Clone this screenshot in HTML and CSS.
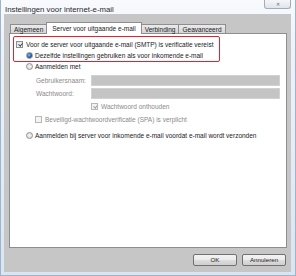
FILE: index.html
```html
<!DOCTYPE html>
<html>
<head>
<meta charset="utf-8">
<link rel="stylesheet" href="styles.css">
</head>
<body>
<div class="window">
  <div class="titlebar">
    <span class="title">Instellingen voor internet-e-mail</span>
    <span class="close">&#x2715;</span>
  </div>
  <div class="client">
    <div class="tabs">
      <span class="tab">Algemeen</span>
      <span class="tab active">Server voor uitgaande e-mail</span>
      <span class="tab">Verbinding</span>
      <span class="tab">Geavanceerd</span>
    </div>
    <div class="panel">
      <div class="hilite">
        <div class="row r1"><span class="cb checked"></span><span class="txt">Voor de server voor uitgaande e-mail (SMTP) is verificatie vereist</span></div>
        <div class="row r2"><span class="rb selected"></span><span class="txt">Dezelfde instellingen gebruiken als voor inkomende e-mail</span></div>
      </div>
      <div class="row r3"><span class="rb"></span><span class="txt">Aanmelden met</span></div>
      <div class="row field-row fr1"><span class="lbl">Gebruikersnaam:</span><span class="field"></span></div>
      <div class="row field-row fr2"><span class="lbl">Wachtwoord:</span><span class="field"></span></div>
      <div class="row r4"><span class="cb checked dis"></span><span class="txt dtxt">Wachtwoord onthouden</span></div>
      <div class="row r5"><span class="cb dis"></span><span class="txt dtxt">Beveiligd-wachtwoordverificatie (SPA) is verplicht</span></div>
      <div class="row r6"><span class="rb"></span><span class="txt">Aanmelden bij server voor inkomende e-mail voordat e-mail wordt verzonden</span></div>
    </div>
    <div class="buttons">
      <span class="btn">OK</span>
      <span class="btn">Annuleren</span>
    </div>
  </div>
</div>
</body>
</html>
```
FILE: styles.css
```css
html, body {
  margin: 0;
  padding: 0;
  background: #e4ecf6;
}
.window {
  width: 296px;
  height: 276px;
  box-sizing: border-box;
  display: flex;
  flex-direction: column;
  background: linear-gradient(180deg, #f8fafd 0, #eef3f9 40px, #d9e5f2 100%);
  border-left: 1px solid #9fb3c9;
  border-right: 1px solid #9fb3c9;
  border-bottom: 1px solid #9fb3c9;
  font-family: "Liberation Sans", Arial, sans-serif;
  color: #1a1a1a;
}
.titlebar {
  height: 14px;
  display: flex;
  justify-content: space-between;
  align-items: flex-start;
  padding: 0 4px 0 4px;
}
.title {
  font-size: 7.8px;
  margin-top: 4.5px;
  color: #2a2a2a;
}
.close {
  width: 27px;
  height: 9px;
  box-sizing: border-box;
  border: 1px solid #a4acb8;
  border-top: none;
  border-radius: 0 0 3px 3px;
  background: linear-gradient(180deg, #f4f6f9, #dfe5ec);
  font-size: 5px;
  line-height: 8px;
  text-align: center;
  color: #6a6a6a;
}
.client {
  flex: 1;
  margin: 0 4px 3px 3px;
  background: #c6c6c6;
  padding: 8px 4px 6px 5px;
  display: flex;
  flex-direction: column;
}
.tabs {
  display: flex;
  align-items: flex-end;
  height: 11px;
  padding-left: 1px;
  position: relative;
  z-index: 1;
}
.tab {
  height: 9px;
  box-sizing: border-box;
  border: 1px solid #8c8e94;
  border-bottom: none;
  background: linear-gradient(180deg, #eaeaea, #d6d6d6);
  font-size: 6.5px;
  line-height: 9px;
  padding: 0 3px;
  margin-right: -1px;
  color: #1a1a1a;
}
.tab.active {
  height: 12px;
  background: #fff;
  line-height: 11px;
  padding: 0 5px;
  margin-bottom: -1px;
  position: relative;
  z-index: 2;
}
.panel {
  flex: 1;
  background: #fff;
  border: 1px solid #8c8e94;
  padding: 2px 0 0 3px;
  font-size: 6.5px;
}
.hilite {
  width: 207px;
  height: 26px;
  box-sizing: border-box;
  border: 1px solid #e8202a;
  border-radius: 2px;
  padding: 2px 0 0 2px;
}
.row {
  display: flex;
  align-items: center;
  white-space: nowrap;
}
.r1, .r2 { height: 11px; }
.r2 { padding-left: 10px; }
.r3 { height: 8px; padding-left: 13px; }
.fr1 { margin-top: 5px; }
.fr2 { margin-top: 2px; }
.field-row { height: 11px; padding-left: 23px; }
.lbl { width: 55px; color: #8a8a8a; }
.field {
  width: 189px;
  height: 11px;
  box-sizing: border-box;
  background: #c4c4c4;
  border: 1px solid #d2d2d2;
}
.r4 { height: 12px; margin-top: 1px; padding-left: 78px; }
.r5 { height: 12px; margin-top: 1px; padding-left: 22px; }
.r6 { height: 12px; margin-top: 4px; padding-left: 13px; }
.txt { margin-left: 3px; }
.r3 .txt, .r6 .txt, .r2 .txt { margin-left: 2px; }
.dtxt { color: #8a8a8a; }
.cb {
  width: 7px;
  height: 7px;
  box-sizing: border-box;
  border: 1px solid #8e8f8f;
  background: linear-gradient(135deg, #e2e2e2, #fbfbfb);
  position: relative;
  flex: none;
}
.cb.checked::after {
  content: "";
  position: absolute;
  left: 1.5px;
  top: 0px;
  width: 1.6px;
  height: 3.2px;
  border-right: 1.2px solid #3a4b6b;
  border-bottom: 1.2px solid #3a4b6b;
  transform: rotate(40deg);
}
.cb.dis { border-color: #b8b8b8; background: #f4f4f4; }
.cb.dis.checked::after { border-color: #a0a0a0; }
.rb {
  width: 7px;
  height: 7px;
  box-sizing: border-box;
  border-radius: 50%;
  border: 1px solid #8e9196;
  background: radial-gradient(circle at 50% 50%, #f4f4f4, #d8d8d8);
  position: relative;
  flex: none;
}
.rb.selected {
  background: radial-gradient(circle at 40% 40%, #8ec2f0 0, #2f6fb6 45%, #1d4e8c 70%, #e8e8e8 72%);
}
.buttons {
  display: flex;
  justify-content: flex-end;
  gap: 5px;
  margin-top: 6px;
  padding-right: 1px;
}
.btn {
  width: 44px;
  height: 12px;
  box-sizing: border-box;
  border: 1px solid #707070;
  border-radius: 2px;
  background: linear-gradient(180deg, #f3f3f3 0, #ebebeb 50%, #dddddd 51%, #cfcfcf 100%);
  font-size: 6.2px;
  line-height: 10px;
  text-align: center;
  color: #1a1a1a;
}
```
